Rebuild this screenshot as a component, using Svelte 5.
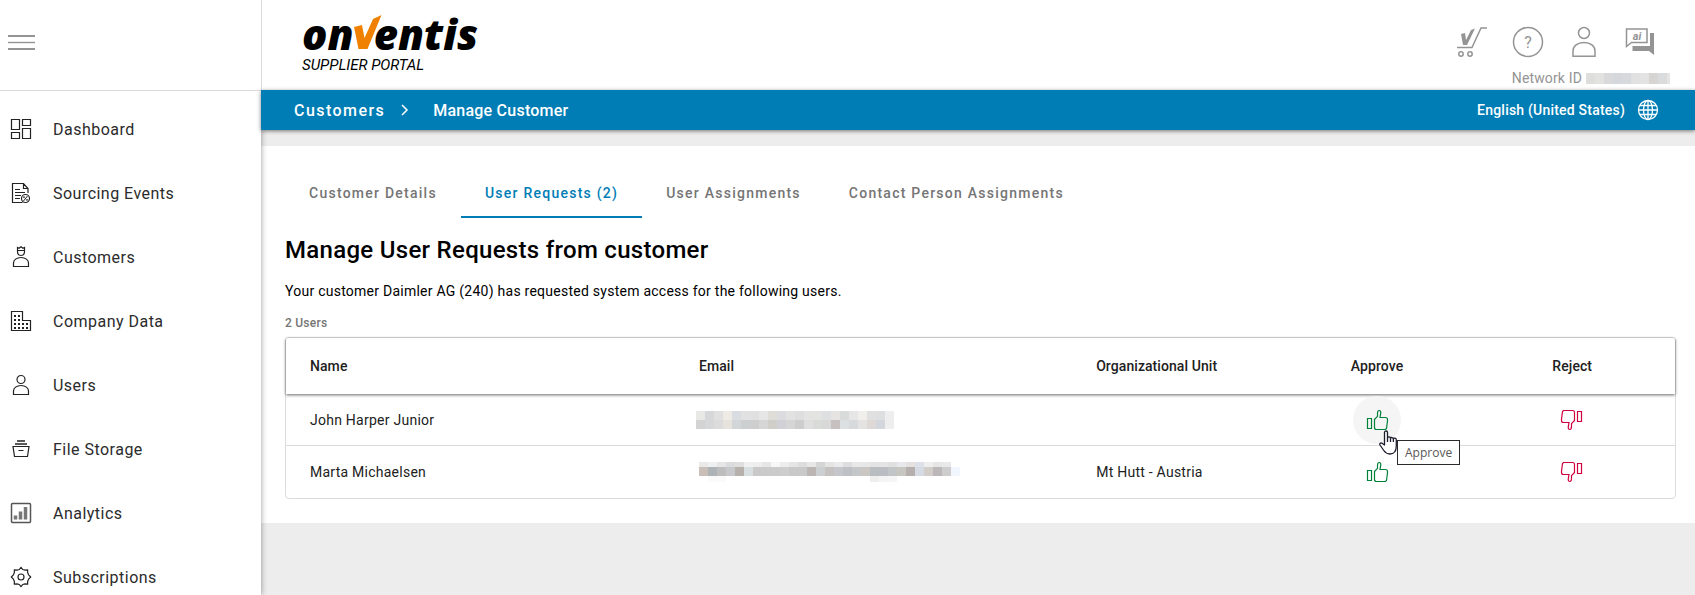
<script>
	const navItems = [
		{ label: 'Dashboard', icon: 'dashboard' },
		{ label: 'Sourcing Events', icon: 'sourcing' },
		{ label: 'Customers', icon: 'customers' },
		{ label: 'Company Data', icon: 'company' },
		{ label: 'Users', icon: 'users' },
		{ label: 'File Storage', icon: 'storage' },
		{ label: 'Analytics', icon: 'analytics' },
		{ label: 'Subscriptions', icon: 'subscriptions' }
	];

	const tabs = ['Customer Details', 'User Requests (2)', 'User Assignments', 'Contact Person Assignments'];
	let activeTab = $state(1);

	// masked values: each strip is a row of 9px wide cells
	const networkMask = {
		width: 84,
		height: 11,
		strips: [
			{ x: 0, y: 0, h: 11, colors: 'dededd e2e2e1 d9d9db d4d7db d6dadd e1e1e1 e3e3e3 d6d5d4 dadbdd e4e4e4'.split(' ') }
		]
	};

	const rows = [
		{
			name: 'John Harper Junior',
			unit: '',
			hovered: true,
			mask: {
				width: 198,
				height: 18,
				strips: [
					{ x: 0, y: 0, h: 9, colors: 'e8e8e7 d6d7d9 e0e0e0 eeebe4 d9dce1 e1e1e1 dfe0df e6e6e6 deddd8 dcdce0 e2e2e2 dddedd e3e3e2 e3e3e1 dddfe1 e5e4e2 d9dbda e6e6e7 f0efec e0e0e0 dedfe0 eeeeee'.split(' ') },
					{ x: 0, y: 9, h: 9, colors: 'd3d3d3 d6d7d9 dcdcdc e6e3dc d2d6d8 cbcfd0 cecece d6d6d6 d0cec8 d2d0d7 d5d5d5 cdcdcd dfdfdf d9dbd9 d8d8d8 c6c0c1 dce0e1 d8d9db e4e3e1 ded9d6 d3d6dd eeeeee'.split(' ') }
				]
			}
		},
		{
			name: 'Marta Michaelsen',
			unit: 'Mt Hutt - Austria',
			hovered: false,
			mask: {
				width: 264,
				height: 20,
				strips: [
					{ x: 3, y: 0, h: 5, colors: 'eae9e8 eef0f1 e6e6e6 d9dbdd dfdfdf f0f0f0 eeeeee e6e6e6 f7f7f7 ededed e5e5e5 dddddd e7e7e7 d5d5d5 e4e4e4 eaeaec dedede e8e8e8 e7e7e7 e3e3e3 e4e4e4 e0e0e0 e6e8eb e5e1de dde0e6 eeeeee e6e6e6 e9e9e9'.split(' ') },
					{ x: 3, y: 5, h: 9, colors: 'c9beb8 adb3b6 bdbdbd c6c8cb b6b1ab d8dfe1 c9c9c9 cacaca cbcbcb cdcdcd c8c8c8 c9c9c9 bbb5b4 cdd0d1 c6c2c1 c5c6cb bfc0c5 c5c6c8 cac6c1 b9bdc0 bcbdc2 c2c5c6 c8c6c1 b5b0ad d5dae3 d2cdc8 bcb8ba cdcdcd f2f7ff'.split(' ') },
					{ x: 12, y: 14, h: 6, colors: 'fafafa fafafa'.split(' ') },
					{ x: 174, y: 14, h: 6, colors: 'efeeed f4f4f4 f6f6f6'.split(' ') }
				]
			}
		}
	];
</script>

{#snippet mosaic(mask)}
	<svg class="mosaic" width={mask.width} height={mask.height} shape-rendering="crispEdges" aria-hidden="true">
		{#each mask.strips as strip}
			{#each strip.colors as color, i}
				<rect x={strip.x + i * 9} y={strip.y} width="9" height={strip.h} fill="#{color}" />
			{/each}
		{/each}
	</svg>
{/snippet}

{#snippet thumb()}
	<svg width="24" height="24" viewBox="0 0 24 24" fill="none" stroke="currentColor" stroke-width="1.2" aria-hidden="true">
		<path d="M2.5 10.5h4v10h-4z" />
		<path d="M9.500 11.500l3-3.200V5.500c0-2 .600-3 1.700-3s1.800 1 1.500 2.800L15 9.500h5.500c1.400 0 2 .800 2 2v1.500l-1 7.500-1 1h-9c-1.300 0-2-.8-2-2z" />
	</svg>
{/snippet}

<svelte:head>
	<title>Manage Customer</title>
</svelte:head>

<div class="app">
	<aside>
		<div class="menu">
			<button aria-label="Menu">
				<svg width="28" height="16" viewBox="0 0 28 16" stroke="#949494" stroke-width="2">
					<path d="M0 1h27M0 14h27" /><path d="M0 7.500h27" stroke-width="1.400" />
				</svg>
			</button>
		</div>
		<nav>
			{#each navItems as item}
				<a href="#{item.icon}">
					<svg width="24" height="24" viewBox="0 0 24 24" fill="none" stroke="#222" stroke-width="1.200" aria-hidden="true">
						{#if item.icon === 'dashboard'}
							<path d="M2.500 2.500h8v10h-8zM13.500 2.500h8v6h-8zM2.500 15.500h8v6h-8zM13.500 11.500h8v10h-8z" />
						{:else if item.icon === 'sourcing'}
							<path d="M19 12V7.500L14.500 2.500h-11v19h10M14.500 2.500v5H19M6 8.500h5M6 11.500h10M6 14.500h6M6 17.500h5" />
							<circle cx="16.500" cy="17.500" r="4" />
							<path d="M14.500 20l4-5" stroke-width="1" /><circle cx="15" cy="16.200" r=".6" stroke-width=".8" /><circle cx="18" cy="18.900" r=".6" stroke-width=".8" />
						{:else if item.icon === 'customers'}
							<path d="M8.500 2.500 10 3.300l2-1.600 2 1.600 1.500-.8v4c0 2.400-1.400 4-3.500 4s-3.500-1.600-3.500-4zM8.500 5.500h7" />
							<path d="M4.500 21.500v-3.500c0-3 3-5.500 7.500-5.500s7.500 2.500 7.500 5.500v3.500z" />
						{:else if item.icon === 'company'}
							<path d="M2.500 2.500h11v9h8v10h-19z" />
							<path d="M5 7h7M5 11h7M5 15h15M5 19h15" stroke-width="2" stroke-dasharray="2 2" />
						{:else if item.icon === 'users'}
							<circle cx="12" cy="6.500" r="4" />
							<path d="M4.500 21.500v-3.500c0-3 3-5.500 7.500-5.500s7.500 2.500 7.500 5.500v3.500z" />
						{:else if item.icon === 'storage'}
							<path d="M8 4h8M6 7h12" stroke-width="1.500" /><path d="M4 9.500h16l-1.500 10h-13zM9.500 13.500h5" />
						{:else if item.icon === 'analytics'}
							<rect x="2.500" y="2.500" width="19" height="19" rx="1" stroke="#555" stroke-width="1.500" />
							<path d="M6.500 18.500v-4M11.500 18.500v-8M16.500 18.500V6" stroke="#777" stroke-width="3.500" />
						{:else}
							<circle cx="12" cy="12" r="3" />
							<path d="M10.300 4.500 12 2.300l1.700 2.200 2.400.6 2.600-.3-.1 2.700 1 2.300 2.100 2.200-2.100 2.200-1 2.300.1 2.700-2.600-.3-2.400.6-1.700 2.200-1.700-2.200-2.400-.6-2.600.3.1-2.700-1-2.300-2.100-2.200 2.100-2.200 1-2.300-.1-2.700 2.600.3z" stroke-linejoin="round" />
						{/if}
					</svg>
					<span>{item.label}</span>
				</a>
			{/each}
		</nav>
	</aside>

	<div class="page">
		<header>
			<div class="logo">
				<div class="wordmark">
					<span>on</span>
					<svg width="29" height="36" viewBox="0 0 29 36" aria-label="v">
						<path d="M1 12l8-2 2.500 13L20 4 28.500 0 14.500 34H5.500z" fill="#f08000" />
					</svg>
					<span>entis</span>
				</div>
				<div class="subtitle">SUPPLIER PORTAL</div>
			</div>
			<div class="tools">
				<div class="tool-icons">
					<button aria-label="Cart">
						<svg width="32" height="32" viewBox="0 0 32 32" fill="none" stroke="#949494" stroke-width="1.500">
							<path d="M31 2h-6l-9 19.500H1" />
							<circle cx="5" cy="28" r="2.200" /><circle cx="14" cy="28" r="2.200" />
							<path d="M5 8l4-1 1 7 5-10 4-1.500L11 19H7z" fill="#949494" stroke="none" />
						</svg>
					</button>
					<button aria-label="Help">
						<svg width="32" height="32" viewBox="0 0 32 32" fill="none" stroke="#949494" stroke-width="1.500">
							<circle cx="16" cy="16" r="14.500" />
							<text x="16" y="21.500" text-anchor="middle" fill="#949494" stroke="none" font-size="16">?</text>
						</svg>
					</button>
					<button aria-label="Profile">
						<svg width="32" height="32" viewBox="0 0 32 32" fill="none" stroke="#949494" stroke-width="1.500">
							<circle cx="16" cy="7" r="5.500" />
							<path d="M5 30.300V25c0-5 4.500-8.500 11-8.500S27 20 27 25v5.300z" />
						</svg>
					</button>
					<button aria-label="AI chat">
						<svg width="32" height="32" viewBox="0 0 32 32" fill="none" stroke="#949494" stroke-width="1.500">
							<path d="M2.500 3h20.500v13.500H7.500l-5 4z" />
							<path d="M26 7h4v22l-5-4H8.500v-5H26z" fill="#949494" stroke="none" />
							<text class="ai" x="13" y="13.500" text-anchor="middle" fill="#949494" stroke="none" font-size="11">ai</text>
						</svg>
					</button>
				</div>
				<div class="network">
					<span>Network ID</span>
					{@render mosaic(networkMask)}
				</div>
			</div>
		</header>

		<div class="bar">
			<div class="crumbs">
				<a href="#customers">Customers</a>
				<svg width="8" height="12" viewBox="0 0 8 12" fill="none" stroke="#fff" stroke-width="1.500" aria-hidden="true">
					<path d="M1 1l5 5-5 5" />
				</svg>
				<span>Manage Customer</span>
			</div>
			<button class="language">
				English (United States)
				<svg width="22" height="22" viewBox="0 0 22 22" fill="none" stroke="#fff" stroke-width="1.300" aria-hidden="true">
					<circle cx="11" cy="11" r="9.500" />
					<ellipse cx="11" cy="11" rx="4.500" ry="9.500" />
					<path d="M11 1.500v19M1.500 11h19M3 6.500h16M3 15.500h16" />
				</svg>
			</button>
		</div>

		<main>
			<div class="tabs" role="tablist">
				{#each tabs as tab, i}
					<button role="tab" aria-selected={activeTab === i} class:active={activeTab === i} onclick={() => (activeTab = i)}>
						{tab}
					</button>
				{/each}
			</div>

			<h1>Manage User Requests from customer</h1>
			<p class="intro">Your customer Daimler AG (240) has requested system access for the following users.</p>
			<p class="count">2 Users</p>

			<div class="table-wrap">
				<table>
					<thead>
						<tr>
							<th class="name">Name</th>
							<th class="email">Email</th>
							<th class="unit">Organizational Unit</th>
							<th class="approve">Approve</th>
							<th class="reject">Reject</th>
						</tr>
					</thead>
					<tbody>
						{#each rows as row}
							<tr>
								<td>{row.name}</td>
								<td>{@render mosaic(row.mask)}</td>
								<td>{row.unit}</td>
								<td class="approve">
									<button class:hovered={row.hovered} aria-label="Approve {row.name}">
										{@render thumb()}
										{#if row.hovered}
											<span class="tooltip">Approve</span>
											<svg class="pointer" width="20" height="26" viewBox="0 0 20 26" fill="#fff" stroke="#1c1c2c" stroke-width="1.300" stroke-linejoin="round" aria-hidden="true">
												<path d="M5.500 15V2.500c0-2 3-2 3 0V8c.2-1.500 2.900-1.400 3 .3.300-1.200 2.700-1 2.900.5.400-1.200 2.900-.8 2.900 1V16c0 5-2.500 8-6.500 8-3 0-4.500-1.300-6-3.500L1 15c-.8-1.500.8-2.500 2-1.700z" />
												<path d="M8.500 8v4M11.500 8.500V12M14.400 9v3" />
											</svg>
										{/if}
									</button>
								</td>
								<td class="reject">
									<button aria-label="Reject {row.name}">{@render thumb()}</button>
								</td>
							</tr>
						{/each}
					</tbody>
				</table>
			</div>
		</main>
	</div>
</div>

<style>
	:global(body) {
		background: #ededed;
		font-family: Roboto, sans-serif;
	}

	button {
		border: 0;
		padding: 0;
		background: none;
		font: inherit;
		color: inherit;
		cursor: pointer;
	}

	a {
		color: inherit;
		text-decoration: none;
	}

	svg {
		display: block;
		flex: none;
	}

	.app {
		display: flex;
		height: 100vh;
		overflow: hidden;
	}

	/* sidebar */
	aside {
		position: relative;
		z-index: 1;
		flex: none;
		width: 261px;
		background: #fff;
		box-shadow: 0 0 6px rgba(0, 0, 0, 0.4);
	}

	.menu {
		display: flex;
		align-items: center;
		box-sizing: border-box;
		height: 91px;
		padding: 0 8px 4px;
		border-bottom: 1px solid #dcdcdc;
	}

	nav {
		padding-top: 6px;
	}

	nav a {
		display: flex;
		align-items: center;
		gap: 20px;
		height: 64px;
		padding-left: 9px;
		color: #2b2b2b;
		font-size: 16px;
		letter-spacing: 0.03em;
	}

	/* header */
	.page {
		flex: 1;
		min-width: 0;
	}

	header,
	.bar {
		position: relative;
		z-index: 2;
		display: flex;
		justify-content: space-between;
		box-sizing: border-box;
	}

	header {
		height: 90px;
		padding: 0 24px 0 40px;
		border-left: 1px solid #dcdcdc;
		background: #fff;
	}

	.logo {
		padding-top: 14px;
		color: #000;
	}

	.wordmark {
		display: flex;
		align-items: flex-end;
		height: 37px;
		font: italic 800 42px/34px 'Open Sans', sans-serif;
	}

	.wordmark svg {
		margin: 0 -8px 0 -1px;
	}

	.subtitle {
		margin-top: 4px;
		font-size: 15px;
		font-style: italic;
		line-height: 20px;
	}

	.tools {
		display: flex;
		flex-direction: column;
		align-items: flex-end;
		padding-top: 26px;
		color: #949494;
	}

	.tool-icons {
		display: flex;
		gap: 24px;
		padding-right: 15px;
	}

	.ai {
		font-style: italic;
		font-weight: 700;
	}

	.network {
		display: flex;
		align-items: center;
		gap: 4px;
		margin-top: 10px;
		padding-right: 1px;
		font-size: 14px;
		line-height: 20px;
		letter-spacing: 0.01em;
	}

	.bar {
		align-items: center;
		height: 40px;
		padding: 0 36px 0 33px;
		background: #007db5;
		box-shadow: 0 1px 4px rgba(0, 0, 0, 0.5);
		color: #fff;
		font-weight: 500;
	}

	.crumbs {
		display: flex;
		align-items: center;
		font-size: 16px;
		letter-spacing: 0.015em;
	}

	.crumbs a {
		letter-spacing: 0.09em;
	}

	.crumbs svg {
		margin: 0 24px 0 16px;
	}

	.language {
		display: flex;
		align-items: center;
		gap: 12px;
		font-size: 14px;
		letter-spacing: 0.015em;
	}

	/* content */
	main {
		margin-top: 16px;
		padding: 24px 19px 24px 24px;
		background: #fff;
	}

	.tabs {
		display: flex;
	}

	.tabs button {
		box-sizing: border-box;
		height: 48px;
		padding: 0 24px;
		border-bottom: 2px solid transparent;
		color: #757575;
		font-size: 14px;
		font-weight: 500;
		letter-spacing: 0.0892em;
	}

	.tabs .active {
		border-color: #007db5;
		color: #007db5;
	}

	h1 {
		margin: 16px 0 0;
		color: #000;
		font-size: 24px;
		font-weight: 500;
		line-height: 32px;
		letter-spacing: 0.0125em;
	}

	p {
		margin: 0;
		line-height: 20px;
	}

	.intro {
		margin-top: 15px;
		color: #000;
		font-size: 14px;
		letter-spacing: 0.0178em;
	}

	.count {
		margin: 12px 0 4px;
		color: #757575;
		font-size: 12px;
		font-weight: 500;
		letter-spacing: 0.02em;
	}

	.table-wrap {
		border: 1px solid #dcdcdc;
		border-radius: 4px;
	}

	table {
		width: 100%;
		border-collapse: separate;
		border-spacing: 0;
		table-layout: fixed;
		color: #212121;
		font-size: 14px;
	}

	thead {
		box-shadow: 0 1px 3px rgba(0, 0, 0, 0.6);
	}

	th,
	td {
		box-sizing: border-box;
		padding: 0 24px;
		text-align: left;
	}

	th {
		height: 56px;
		font-weight: 500;
		letter-spacing: 0.005em;
	}

	td {
		height: 52px;
		border-bottom: 1px solid #dcdcdc;
		letter-spacing: 0.0178em;
	}

	tbody tr:last-child td {
		border-bottom: 0;
	}

	.name {
		width: 28%;
	}

	.email {
		width: 28.6%;
	}

	.unit {
		width: 15.3%;
	}

	.approve {
		width: 13.3%;
		text-align: center;
	}

	.reject {
		text-align: center;
	}

	td .mosaic {
		margin-left: -3px;
	}

	td button {
		position: relative;
		display: grid;
		place-items: center;
		width: 48px;
		height: 48px;
		margin: 0 auto;
		border-radius: 50%;
		color: #00813a;
	}

	.reject button {
		color: #d1003f;
	}

	.reject svg {
		transform: rotate(180deg);
	}

	.hovered {
		background: #f5f5f5;
	}

	.tooltip {
		position: absolute;
		top: 44px;
		left: 44px;
		z-index: 3;
		padding: 0 7px;
		border: 1px solid #2b2b2b;
		background: #fff;
		color: #575757;
		font: 12px/23px 'Open Sans', sans-serif;
	}

	.pointer {
		position: absolute;
		top: 34px;
		left: 26px;
		z-index: 4;
	}
</style>
